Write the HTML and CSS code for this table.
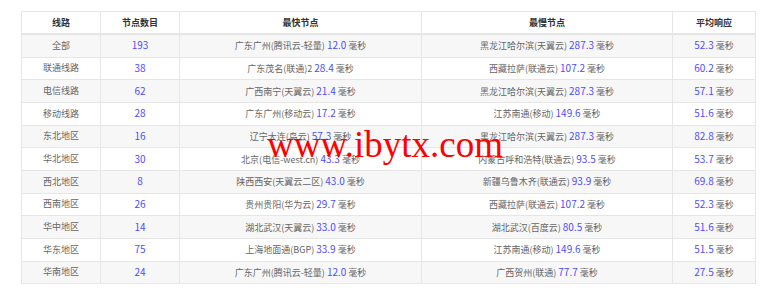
FILE: index.html
```html
<!DOCTYPE html>
<html lang="zh-CN">
<head>
<meta charset="utf-8">
<link rel="stylesheet" href="styles.css">
</head>
<body>
<div class="wrap">
<table class="stats">
<thead>
<tr><th class="c1">线路</th><th class="c2">节点数目</th><th class="c3">最快节点</th><th class="c4">最慢节点</th><th class="c5">平均响应</th></tr>
</thead>
<tbody>
<tr><td>全部</td><td><span class="num">193</span></td><td>广东广州(腾讯云-轻量) <span class="num">12.0</span> 毫秒</td><td>黑龙江哈尔滨(天翼云) <span class="num">287.3</span> 毫秒</td><td><span class="num">52.3</span> 毫秒</td></tr>
<tr><td>联通线路</td><td><span class="num">38</span></td><td>广东茂名(联通)2 <span class="num">28.4</span> 毫秒</td><td>西藏拉萨(联通云) <span class="num">107.2</span> 毫秒</td><td><span class="num">60.2</span> 毫秒</td></tr>
<tr><td>电信线路</td><td><span class="num">62</span></td><td>广西南宁(天翼云) <span class="num">21.4</span> 毫秒</td><td>黑龙江哈尔滨(天翼云) <span class="num">287.3</span> 毫秒</td><td><span class="num">57.1</span> 毫秒</td></tr>
<tr><td>移动线路</td><td><span class="num">28</span></td><td>广东广州(移动云) <span class="num">17.2</span> 毫秒</td><td>江苏南通(移动) <span class="num">149.6</span> 毫秒</td><td><span class="num">51.6</span> 毫秒</td></tr>
<tr><td>东北地区</td><td><span class="num">16</span></td><td>辽宁大连(鸟云) <span class="num">57.3</span> 毫秒</td><td>黑龙江哈尔滨(天翼云) <span class="num">287.3</span> 毫秒</td><td><span class="num">82.8</span> 毫秒</td></tr>
<tr><td>华北地区</td><td><span class="num">30</span></td><td>北京(电信-west.cn) <span class="num">43.3</span> 毫秒</td><td>内蒙古呼和浩特(联通云) <span class="num">93.5</span> 毫秒</td><td><span class="num">53.7</span> 毫秒</td></tr>
<tr><td>西北地区</td><td><span class="num">8</span></td><td>陕西西安(天翼云二区) <span class="num">43.0</span> 毫秒</td><td>新疆乌鲁木齐(联通云) <span class="num">93.9</span> 毫秒</td><td><span class="num">69.8</span> 毫秒</td></tr>
<tr><td>西南地区</td><td><span class="num">26</span></td><td>贵州贵阳(华为云) <span class="num">29.7</span> 毫秒</td><td>西藏拉萨(联通云) <span class="num">107.2</span> 毫秒</td><td><span class="num">52.3</span> 毫秒</td></tr>
<tr><td>华中地区</td><td><span class="num">14</span></td><td>湖北武汉(天翼云) <span class="num">33.0</span> 毫秒</td><td>湖北武汉(百度云) <span class="num">80.5</span> 毫秒</td><td><span class="num">51.6</span> 毫秒</td></tr>
<tr><td>华东地区</td><td><span class="num">75</span></td><td>上海地面通(BGP) <span class="num">33.9</span> 毫秒</td><td>江苏南通(移动) <span class="num">149.6</span> 毫秒</td><td><span class="num">51.5</span> 毫秒</td></tr>
<tr><td>华南地区</td><td><span class="num">24</span></td><td>广东广州(腾讯云-轻量) <span class="num">12.0</span> 毫秒</td><td>广西贺州(联通) <span class="num">77.7</span> 毫秒</td><td><span class="num">27.5</span> 毫秒</td></tr>
</tbody>
</table>
<div class="watermark">www.ibytx.com</div>
</div>
</body>
</html>
```

FILE: styles.css
```css
html, body {
  margin: 0;
  padding: 0;
  background: #ffffff;
}

.wrap {
  position: relative;
  padding: 11px 0 0 21px;
}

.stats {
  border-collapse: collapse;
  table-layout: fixed;
  width: 734px;
  font-family: "Noto Sans CJK SC", "Noto Sans", sans-serif;
  font-size: 9px;
  color: #666666;
}

.stats th,
.stats td {
  border: 1px solid #e6e6e6;
  text-align: center;
  padding: 0;
  white-space: nowrap;
  overflow: hidden;
}

.stats th {
  height: 21px;
  font-weight: bold;
  color: #333333;
  border-bottom: 2px solid #e6e6e6;
}

.stats td {
  height: 21.67px;
  line-height: 12px;
}

.stats tbody tr:nth-child(odd) {
  background: #f7f7f7;
}

.c1 { width: 78px; }
.c2 { width: 78px; }
.c3 { width: 241px; }
.c4 { width: 250px; }
.c5 { width: 82px; }

.num {
  color: #4d4dff;
  font-size: 10px;
}

.watermark {
  position: absolute;
  left: 267px;
  top: 123px;
  font-family: "Liberation Serif", "Times New Roman", serif;
  font-size: 37px;
  line-height: 44px;
  color: #ff0000;
  white-space: nowrap;
}
```
